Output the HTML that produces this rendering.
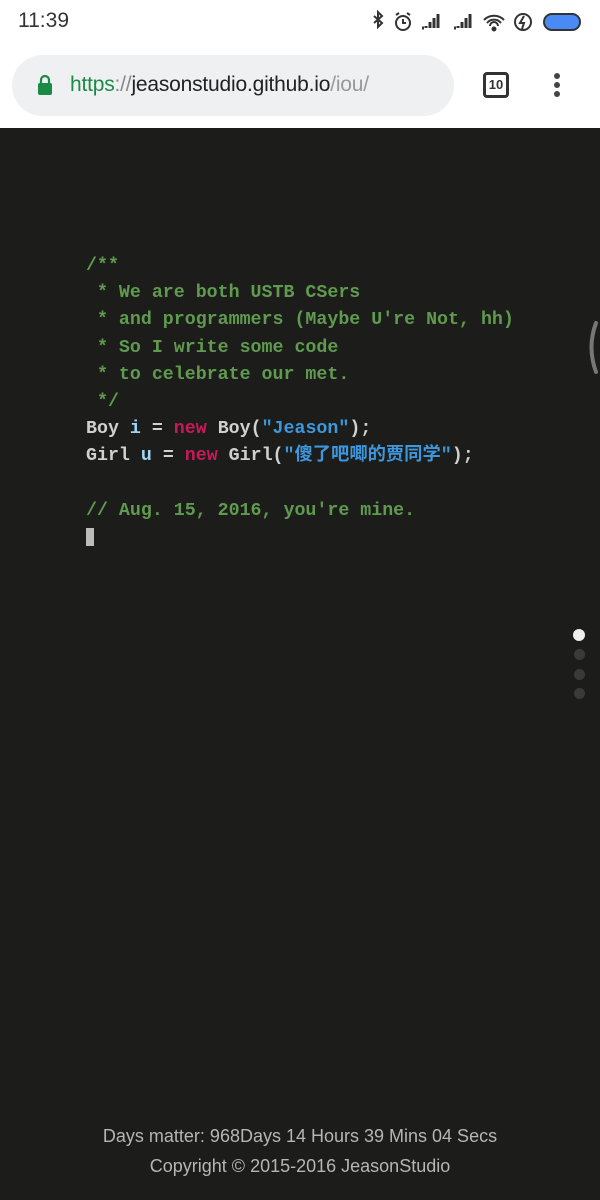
<!DOCTYPE html>
<html><head><meta charset="utf-8"><style>
*{margin:0;padding:0;box-sizing:border-box}
body{width:600px;height:1200px;background:#1c1d1b;position:relative;overflow:hidden;font-family:"Liberation Sans",sans-serif}
.top{position:absolute;left:0;top:0;width:600px;height:128px;background:#fff}
.time{position:absolute;left:18px;top:9px;font-size:21px;color:#333}
.bar{position:absolute;left:12px;top:55px;width:442px;height:61px;border-radius:31px;background:#eff0f2}
.url{position:absolute;left:58px;top:18px;font-size:21px;color:#222;letter-spacing:-0.2px}
.code{position:absolute;left:86px;top:253px;font-family:"Liberation Mono","Noto Sans CJK SC",monospace;font-size:18.3px;line-height:27.2px;color:#d0d0d0;white-space:pre;font-weight:bold}
.c{color:#5f9a4f}.k{color:#c8195a}.s{color:#3d97dc}.v{color:#9fd4f8}
.foot{position:absolute;left:0;width:600px;text-align:center;color:#b5b5b5;font-size:18px}
.dot{position:absolute;left:574px;width:11px;height:11px;border-radius:50%;background:#3a3b39}
</style></head><body>
<div class="top">
<div class="time">11:39</div>
<svg style="position:absolute;left:368px;top:10px" width="215" height="24" viewBox="0 0 215 24" fill="none" stroke="#333" stroke-width="2">
<path d="M6 6l8 7-4 4V2l4 4-8 7"/>
<circle cx="35" cy="13" r="7"/><path d="M35 9v4h3M28 5l3-2M42 5l-3-2"/>
<path d="M54 18h2M58 16v2M62 12v6M66 8v10M70 4v14" stroke-width="3"/>
<path d="M86 18h2M90 16v2M94 12v6M98 8v10M102 4v14" stroke-width="3"/>
<path d="M116 10a14 14 0 0 1 20 0M119 13a9 9 0 0 1 14 0M122 16a4 4 0 0 1 8 0"/><circle cx="126" cy="19" r="1.5" fill="#333"/>
<circle cx="155" cy="12" r="8"/><path d="M156 6l-4 7h4l-2 6" stroke-width="2"/>
<rect x="176" y="4" width="36" height="16" rx="8" fill="#4a8af4" stroke="#333"/>
</svg>
<div class="bar">
<svg style="position:absolute;left:25px;top:18px" width="16" height="24" viewBox="0 0 16 24"><path d="M4 10V7a4 4 0 0 1 8 0v3" fill="none" stroke="#1a8a44" stroke-width="2.2"/><rect x="1" y="10" width="14" height="12" rx="2" fill="#1a8a44"/></svg>
<div class="url"><span style="color:#1a8a44">https</span><span style="color:#888">://</span>jeasonstudio.github.io<span style="color:#999">/iou/</span></div>
</div>
<div style="position:absolute;left:483px;top:72px;width:26px;height:26px;border:3px solid #333;border-radius:4px;font-size:13px;font-weight:bold;text-align:center;line-height:20px;color:#333">10</div>
<div style="position:absolute;left:554px;top:73px;width:6px;height:6px;border-radius:3px;background:#444;box-shadow:0 9px 0 #444,0 18px 0 #444"></div>
</div>
<div class="code"><span class="c">/**
 * We are both USTB CSers
 * and programmers (Maybe U're Not, hh)
 * So I write some code
 * to celebrate our met.
 */</span>
Boy <span class="v">i</span> = <span class="k">new</span> Boy(<span class="s">"Jeason"</span>);
Girl <span class="v">u</span> = <span class="k">new</span> Girl(<span class="s">"傻了吧唧的贾同学"</span>);

<span class="c">// Aug. 15, 2016, you're mine.</span>
</div>
<div style="position:absolute;left:86px;top:528px;width:8px;height:18px;background:#bbb"></div>
<svg style="position:absolute;left:584px;top:320px" width="16" height="56"><path d="M12 3Q3 27 12 52" fill="none" stroke="#777" stroke-width="4" stroke-linecap="round"/></svg>
<div class="dot" style="top:629px;background:#eee;width:12px;height:12px;left:573px"></div>
<div class="dot" style="top:649px"></div>
<div class="dot" style="top:669px"></div>
<div class="dot" style="top:688px"></div>
<div class="foot" style="top:1126px">Days matter: 968Days 14 Hours 39 Mins 04 Secs</div>
<div class="foot" style="top:1156px">Copyright © 2015-2016 JeasonStudio</div>
</body></html>
